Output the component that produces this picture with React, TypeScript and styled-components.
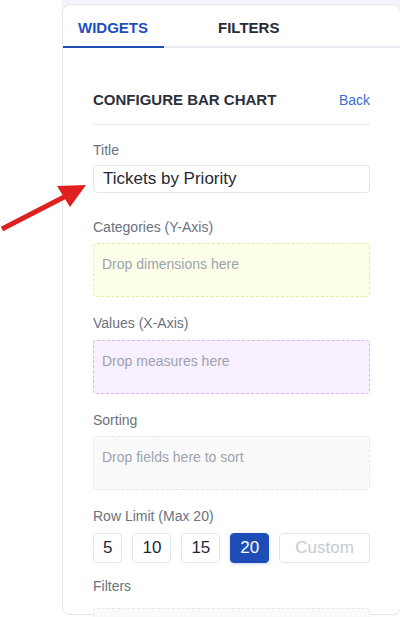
import React from "react";
import styled, { createGlobalStyle } from "styled-components";

const GlobalStyle = createGlobalStyle`
    html, body {
        margin: 0;
        padding: 0;
        background: #ffffff;
        font-family: "Liberation Sans", Arial, sans-serif;
    }
    * {
        box-sizing: border-box;
    }
`;

const Page = styled.div`
    position: relative;
    width: 400px;
    height: 617px;
    overflow: hidden;
`;

const Frame = styled.div`
    margin-left: 62px;
    padding-top: 4px;
    background: linear-gradient(#f4f5fb 0, #f4f5fb 10px, transparent 10px);
`;

const Panel = styled.div`
    width: 339px;
    height: 611px;
    background: #ffffff;
    border: 1px solid #e4e6ee;
    border-radius: 8px;
`;

const TabBar = styled.div`
    display: flex;
    gap: 39px;
    height: 43px;
    border-bottom: 2px solid #e9ebf3;
`;

const Tab = styled.div<{ $active?: boolean }>`
    height: 43px;
    margin-bottom: -2px;
    padding: 3px 16px 0 15px;
    display: flex;
    align-items: center;
    font-size: 15px;
    font-weight: 700;
    color: ${(p) => (p.$active ? "#1e4fc0" : "#262b36")};
    border-bottom: 2px solid ${(p) => (p.$active ? "#1e4db7" : "transparent")};
`;

const Content = styled.div`
    padding: 41px 30px 0 30px;
`;

const Header = styled.div`
    display: flex;
    justify-content: space-between;
    align-items: center;
    height: 36px;
    padding-bottom: 14px;
    border-bottom: 1px solid #e8eaf0;
`;

const Heading = styled.h2`
    margin: 0;
    font-size: 15px;
    font-weight: 700;
    line-height: 20px;
    color: #2b303b;
`;

const BackLink = styled.a`
    font-size: 14px;
    line-height: 20px;
    color: #3b6fd1;
    text-decoration: none;
`;

const Field = styled.div<{ $top: number }>`
    margin-top: ${(p) => p.$top}px;
`;

const Label = styled.div<{ $gap?: number }>`
    font-size: 14px;
    line-height: 16px;
    color: #6b7280;
    margin-bottom: ${(p) => p.$gap ?? 8}px;
`;

const TextInput = styled.div`
    height: 28px;
    padding: 0 9px;
    display: flex;
    align-items: center;
    border: 1px solid #e3e5ec;
    border-radius: 4px;
    font-size: 17px;
    color: #1f2937;
`;

const tones = {
    yellow: { bg: "#fdffe8", border: "#e6ee9c" },
    purple: { bg: "#f8efff", border: "#dbb2f7" },
    gray: { bg: "#fafafa", border: "#e6e7ec" },
};

const DropZone = styled.div<{ $tone: keyof typeof tones }>`
    height: 54px;
    padding: 12px 8px;
    background: ${(p) => tones[p.$tone].bg};
    border: 1px dashed ${(p) => tones[p.$tone].border};
    border-radius: 4px;
    font-size: 14px;
    line-height: 16px;
    color: #9ca3af;
`;

const LimitRow = styled.div`
    display: flex;
    gap: 10px;
`;

const LimitButton = styled.button<{ $selected?: boolean }>`
    height: 30px;
    padding: 0 9px;
    font-family: inherit;
    font-size: 17px;
    border-radius: 4px;
    border: 1px solid ${(p) => (p.$selected ? "#1e4db7" : "#e3e5ec")};
    background: ${(p) => (p.$selected ? "#1e4db7" : "#ffffff")};
    color: ${(p) => (p.$selected ? "#ffffff" : "#1f2937")};
    box-shadow: ${(p) => (p.$selected ? "0 1px 3px rgba(30, 77, 183, 0.25)" : "none")};
`;

const CustomInput = styled.div`
    flex: 1;
    height: 30px;
    display: flex;
    align-items: center;
    justify-content: center;
    border: 1px solid #e3e5ec;
    border-radius: 4px;
    font-size: 17px;
    color: #c8cbd2;
`;

const Arrow = styled.svg`
    position: absolute;
    left: 0;
    top: 175px;
`;

const limits = [5, 10, 15, 20];

const App = () => {
    return (
        <Page>
            <GlobalStyle />
            <Frame>
                <Panel>
                    <TabBar>
                        <Tab $active>WIDGETS</Tab>
                        <Tab>FILTERS</Tab>
                    </TabBar>
                    <Content>
                        <Header>
                            <Heading>CONFIGURE BAR CHART</Heading>
                            <BackLink href="#">Back</BackLink>
                        </Header>

                        <Field $top={17}>
                            <Label $gap={7}>Title</Label>
                            <TextInput>Tickets by Priority</TextInput>
                        </Field>

                        <Field $top={26}>
                            <Label>Categories (Y-Axis)</Label>
                            <DropZone $tone="yellow">Drop dimensions here</DropZone>
                        </Field>

                        <Field $top={18}>
                            <Label $gap={9}>Values (X-Axis)</Label>
                            <DropZone $tone="purple">Drop measures here</DropZone>
                        </Field>

                        <Field $top={18}>
                            <Label>Sorting</Label>
                            <DropZone $tone="gray">Drop fields here to sort</DropZone>
                        </Field>

                        <Field $top={18}>
                            <Label $gap={9}>Row Limit (Max 20)</Label>
                            <LimitRow>
                                {limits.map((n) => (
                                    <LimitButton key={n} $selected={n === 20}>
                                        {n}
                                    </LimitButton>
                                ))}
                                <CustomInput>Custom</CustomInput>
                            </LimitRow>
                        </Field>

                        <Field $top={15}>
                            <Label $gap={14}>Filters</Label>
                            <DropZone $tone="gray" />
                        </Field>
                    </Content>
                </Panel>
            </Frame>

            <Arrow width="90" height="60" viewBox="0 0 90 60">
                <line x1="2" y1="54" x2="66" y2="21" stroke="#e02020" strokeWidth="5" />
                <polygon points="57,11 86,10 70,32" fill="#e02020" />
            </Arrow>
        </Page>
    );
};

export default App;
